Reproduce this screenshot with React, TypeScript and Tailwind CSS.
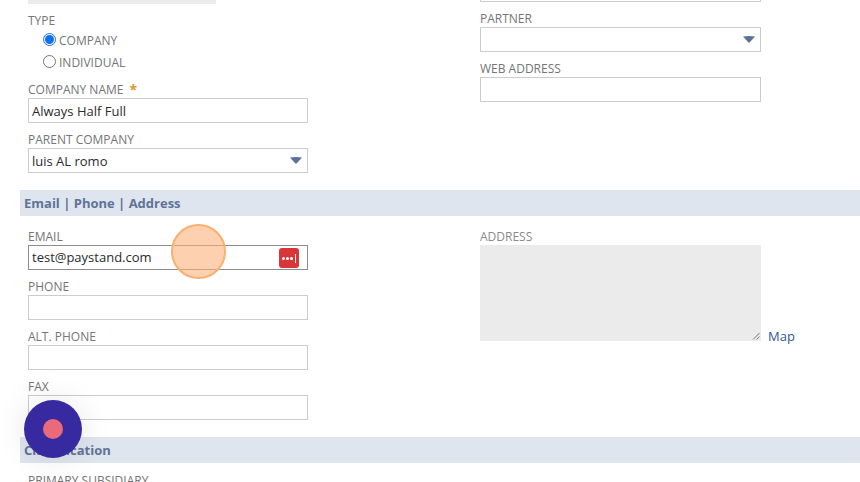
const font = { fontFamily: '"Open Sans", sans-serif' };

function Caret() {
  return (
    <svg width="12" height="7" viewBox="0 0 12 7" className="absolute right-[5px] top-[8px]">
      <path d="M0 0.5 Q6 -0.5 12 0.5 L6.8 6.3 Q6 7 5.2 6.3 Z" fill="#5a7299" />
    </svg>
  );
}

function Field({ label, value, select, required, dark, children }: {
  label: string;
  value?: string;
  select?: boolean;
  required?: boolean;
  dark?: boolean;
  children?: React.ReactNode;
}) {
  return (
    <div>
      <div className="h-[16px] flex items-center text-[12px] leading-none text-[#757575] whitespace-nowrap">
        {label}
        {required && <span className="ml-[6px] text-[14px] font-bold text-[#d9992b]">*</span>}
      </div>
      <div
        className={`relative h-[25px] flex items-center pl-[3px] border text-[13px] text-[#2b2b2b] bg-white ${
          dark ? "border-[#8c8c8c]" : "pt-[2px] border-[#cccccc]"
        }`}
      >
        {value}
        {select && <Caret />}
        {children}
      </div>
    </div>
  );
}

function Radio({ label, checked }: { label: string; checked?: boolean }) {
  return (
    <div className="h-[22px] flex items-center pl-[15px] text-[12px] text-[#757575]">
      {checked ? (
        <span className="w-[13px] h-[13px] rounded-full border border-[#1a6fe8] flex items-center justify-center mr-[3px] -mt-[3px]">
          <span className="w-[9px] h-[9px] rounded-full bg-[#0f6fee]" />
        </span>
      ) : (
        <span className="w-[13px] h-[13px] rounded-full border border-[#767676] mr-[3px] -mt-[3px]" />
      )}
      {label}
    </div>
  );
}

function Section({ title, className }: { title: string; className?: string }) {
  return (
    <div className={`h-[26px] ml-[20px] pl-[4px] pt-[1px] flex items-center bg-[#dfe5ee] text-[13px] font-bold text-[#5f7396] ${className ?? ""}`}>
      {title}
    </div>
  );
}

export default function App() {
  return (
    <div className="relative w-[860px] h-[482px] overflow-hidden bg-white" style={font}>
      <div className="flex">
        {/* general info, left */}
        <div className="ml-[28px] w-[280px]">
          <div className="h-[4px] w-[188px] bg-[#ebebeb]" />
          <div className="mt-[9px] h-[16px] flex items-center text-[12px] leading-none text-[#757575]">TYPE</div>
          <div className="mt-[1px]">
            <Radio label="COMPANY" checked />
            <Radio label="INDIVIDUAL" />
          </div>
          <div className="mt-[8px] flex flex-col gap-[9px]">
            <Field label="COMPANY NAME" value="Always Half Full" required />
            <Field label="PARENT COMPANY" value="luis AL romo" select />
          </div>
        </div>
        {/* general info, right */}
        <div className="ml-[172px] w-[281px]">
          <div className="h-[2px] border-x border-b border-[#cccccc]" />
          <div className="mt-[9px] flex flex-col gap-[9px]">
            <Field label="PARTNER" select />
            <Field label="WEB ADDRESS" />
          </div>
        </div>
      </div>

      <Section title="Email | Phone | Address" className="mt-[17px]" />

      <div className="flex mt-[13px]">
        <div className="ml-[28px] w-[280px] flex flex-col gap-[9px]">
          <Field label="EMAIL" value="test@paystand.com" dark>
            <span className="absolute right-[8px] top-[2px] w-[20px] h-[20px] rounded-[3px] bg-[#d9363a] flex items-center justify-center gap-[1px]">
              <span className="w-[3px] h-[3px] rounded-full bg-white" />
              <span className="w-[3px] h-[3px] rounded-full bg-white" />
              <span className="w-[3px] h-[3px] rounded-full bg-white" />
              <span className="ml-[1px] w-[1px] h-[9px] bg-white" />
            </span>
          </Field>
          <Field label="PHONE" />
          <Field label="ALT. PHONE" />
          <Field label="FAX" />
        </div>
        <div className="ml-[172px]">
          <div className="h-[16px] flex items-center text-[12px] leading-none text-[#8a8a8a]">ADDRESS</div>
          <div className="flex items-end">
            <div className="relative w-[281px] h-[96px] bg-[#ebebeb]">
              <svg width="8" height="8" viewBox="0 0 8 8" className="absolute right-[1px] bottom-[1px]">
                <path d="M1 7.5 L7.5 1 M4.5 7.5 L7.5 4.5" stroke="#555555" strokeWidth="0.8" fill="none" />
              </svg>
            </div>
            <span className="ml-[7px] text-[13px] leading-[10px] text-[#2f5a92]">Map</span>
          </div>
        </div>
      </div>

      <Section title="Classification" className="mt-[17px]" />

      <div className="ml-[28px] mt-[10px] text-[12px] leading-[16px] text-[#757575]">PRIMARY SUBSIDIARY</div>

      {/* click marker */}
      <div className="absolute left-[171px] top-[224px] w-[55px] h-[55px] rounded-full border-2 border-[#fbb06f] bg-[#fcb27a]/60" />

      {/* recorder button */}
      <div className="absolute left-[24px] top-[400px] w-[58px] h-[58px] rounded-full bg-[#3729a0] flex items-center justify-center shadow-[0_0_32px_rgba(0,0,0,0.1)]">
        <span className="w-[20px] h-[20px] rounded-full bg-[#e96a78]" />
      </div>
    </div>
  );
}
